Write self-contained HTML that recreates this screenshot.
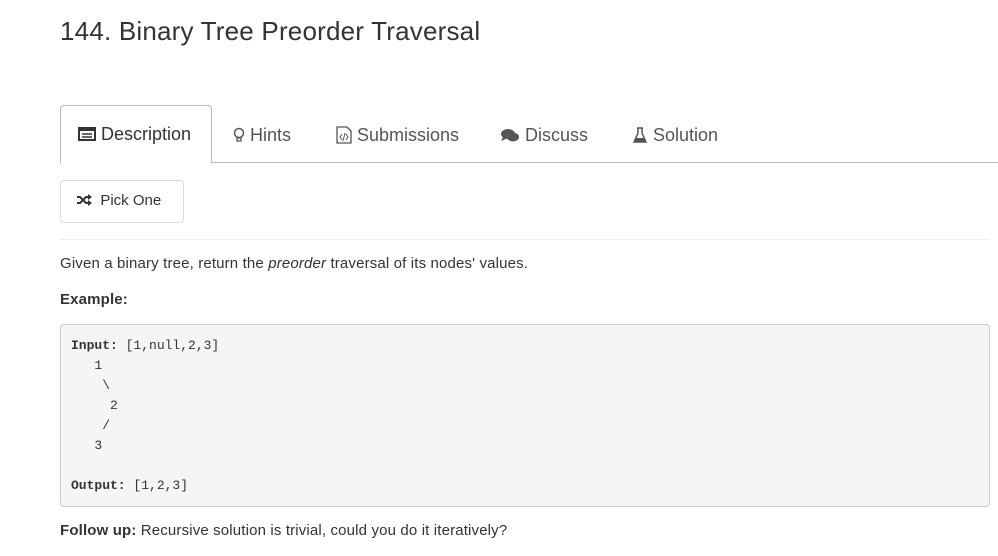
<!DOCTYPE html>
<html><head><style>
body{margin:0;background:#fff;font-family:"Liberation Sans",sans-serif;color:#333;width:998px;height:556px;overflow:hidden;position:relative}
.a{position:absolute}
h1{position:absolute;left:60px;top:16px;margin:0;font-size:26px;font-weight:normal;color:#333;letter-spacing:0.2px}
.tabline{left:60px;top:162px;width:938px;height:1px;background:#bbb}
.active{left:60px;top:105px;width:150px;height:57px;border:1px solid #bbb;border-bottom:1px solid #fff;border-radius:4px 4px 0 0;background:#fff}
.tab{font-size:18px;color:#555;top:125px;white-space:nowrap}
.btn{left:60px;top:180px;width:122px;height:41px;border:1px solid #ddd;border-radius:4px;font-size:15px;color:#333}
.sep{left:60px;top:239px;width:930px;height:1px;background:#eee}
.p{font-size:15px;letter-spacing:0.15px}
pre{position:absolute;left:60px;top:324px;width:910px;height:164px;margin:0;padding:11px 8px 6px 10px;border:1px solid #ccc;border-radius:4px;background:#f5f5f5;font-family:"Liberation Mono",monospace;font-size:13px;line-height:20px;color:#333}
</style></head><body>
<h1>144. Binary Tree Preorder Traversal</h1>
<div class="a tabline"></div>
<div class="a active"></div>
<div class="a tab" style="left:78px;top:124px;color:#333">
<svg width="18" height="14" style="vertical-align:-1px" viewBox="0 0 18 14"><rect x="1" y="1" width="16" height="12" fill="none" stroke="#333" stroke-width="2"/><rect x="1" y="1" width="16" height="3" fill="#333"/><path d="M4 7h10M4 10h10" stroke="#333" stroke-width="1.5"/></svg>&nbsp;Description</div>
<div class="a tab" style="left:233px">
<svg width="12" height="16" viewBox="0 0 12 16" style="vertical-align:-2px"><circle cx="6" cy="6" r="4.5" fill="none" stroke="#555" stroke-width="1.5"/><path d="M4 11h4v3H4z" fill="none" stroke="#555" stroke-width="1.3"/></svg>&nbsp;Hints</div>
<div class="a tab" style="left:336px">
<svg width="16" height="18" viewBox="0 0 16 18" style="vertical-align:-3px"><path d="M1 1h10l4 4v12H1z" fill="none" stroke="#555" stroke-width="1.3"/><path d="M6 8l-2 3 2 3M10 8l2 3-2 3M9 7l-2 8" fill="none" stroke="#555"/></svg>&nbsp;Submissions</div>
<div class="a tab" style="left:500px">
<svg width="20" height="16" viewBox="0 0 20 16" style="vertical-align:-2px"><ellipse cx="8" cy="7" rx="7" ry="5" fill="#555"/><ellipse cx="13" cy="10" rx="6" ry="4.5" fill="#555"/><path d="M3 10l-2 4 5-2z" fill="#555"/></svg>&nbsp;Discuss</div>
<div class="a tab" style="left:632px">
<svg width="16" height="16" viewBox="0 0 16 16" style="vertical-align:-2px"><path d="M5 1h6M6 1v5L2 15h12L10 6V1" fill="none" stroke="#555" stroke-width="1.5"/><path d="M4 11h8l2 4H2z" fill="#555"/></svg>&nbsp;Solution</div>
<div class="a btn"><span class="a" style="left:15px;top:11px;white-space:nowrap">
<svg width="16" height="12" viewBox="0 0 16 12" style="vertical-align:-1px"><path d="M1 3h3l6 6h3M1 9h3l6-6h3" fill="none" stroke="#333" stroke-width="2"/><path d="M12 0l4 3-4 3zM12 6l4 3-4 3z" fill="#333"/></svg>&nbsp;&nbsp;Pick One</span></div>
<div class="a sep"></div>
<div class="a p" style="left:60px;top:255px">Given a binary tree, return the <i>preorder</i> traversal of its nodes' values.</div>
<div class="a p" style="left:60px;top:291px;font-weight:bold">Example:</div>
<pre><b>Input:</b> [1,null,2,3]
   1
    \
     2
    /
   3

<b>Output:</b> [1,2,3]</pre>
<div class="a p" style="left:60px;top:522px"><b>Follow up:</b> Recursive solution is trivial, could you do it iteratively?</div>
</body></html>
